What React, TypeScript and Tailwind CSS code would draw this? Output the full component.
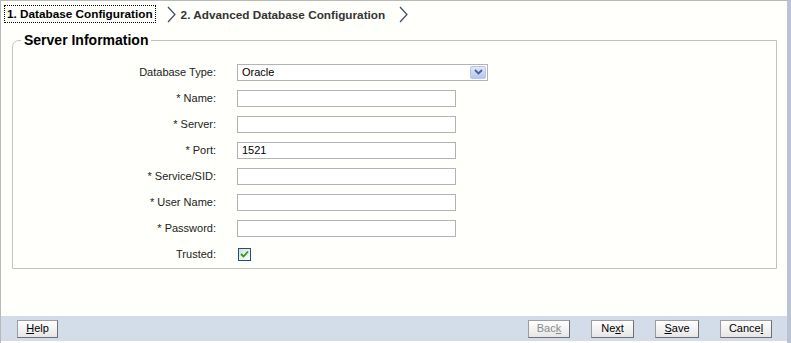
import React from "react";

const font = { fontFamily: '"Liberation Sans", Arial, sans-serif' };

function Chevron() {
  return (
    <svg width="11" height="17" viewBox="0 0 11 17" className="shrink-0">
      <polyline points="2,1 9,8.5 2,16" fill="none" stroke="#3d4a5c" strokeWidth="1.2" />
    </svg>
  );
}

function TextField({ value = "" }: { value?: string }) {
  return (
    <div className="h-[17px] w-[219px] border border-[#b3b3b3] bg-white pl-[4px] text-[11px] leading-[15px] text-black">
      {value}
    </div>
  );
}

function SelectField() {
  return (
    <div className="flex h-[17px] w-[251px] items-center justify-between border border-[#b3b3b3] bg-white pl-[4px] pr-[1px] text-[11px] text-black">
      <span>Oracle</span>
      <span className="flex h-[13px] w-[16px] items-center justify-center rounded-[2px] border border-[#b7c7ef] bg-gradient-to-b from-[#dfe8fb] to-[#b4c6f1]">
        <svg width="9" height="6" viewBox="0 0 9 6">
          <polyline points="1,1 4.5,4.5 8,1" fill="none" stroke="#4d6185" strokeWidth="1.8" />
        </svg>
      </span>
    </div>
  );
}

function Checkbox() {
  return (
    <div className="ml-[1px] flex h-[13px] w-[13px] items-center justify-center border border-[#1c5180] bg-gradient-to-br from-[#dcdcd7] to-[#ffffff]">
      <svg width="9" height="8" viewBox="0 0 9 8">
        <polyline points="1,4 3.5,6.5 8,1.5" fill="none" stroke="#21a121" strokeWidth="1.8" />
      </svg>
    </div>
  );
}

function Btn({ children, w, disabled }: { children: React.ReactNode; w: string; disabled?: boolean }) {
  return (
    <div
      className={`${w} flex h-[18px] items-center justify-center border border-[#9c9c9c] border-b-[#6f6f6f] border-r-[#6f6f6f] bg-gradient-to-b from-[#ffffff] to-[#e6e6e6] text-[11px] ${
        disabled ? "text-[#8a8a8a]" : "text-black"
      }`}
    >
      {children}
    </div>
  );
}

const rows: { label: string; field: React.ReactNode }[] = [
  { label: "Database Type:", field: <SelectField /> },
  { label: "* Name:", field: <TextField /> },
  { label: "* Server:", field: <TextField /> },
  { label: "* Port:", field: <TextField value="1521" /> },
  { label: "* Service/SID:", field: <TextField /> },
  { label: "* User Name:", field: <TextField /> },
  { label: "* Password:", field: <TextField /> },
  { label: "Trusted:", field: <Checkbox /> },
];

export default function App() {
  return (
    <div
      style={font}
      className="flex h-[343px] w-[791px] flex-col overflow-hidden border-l border-t border-[#b9b9b9] border-r-[4px] border-r-[#b9c3d2] bg-[#fffffc]"
    >
      {/* train */}
      <div className="flex h-[39px] items-start gap-[10px] pl-[3px] pt-[4px]">
        <div className="flex h-[18px] items-center border border-dotted border-black px-[2px] text-[11.75px] font-bold text-black">
          1. Database Configuration
        </div>
        <div className="flex items-center gap-[4px] pt-[1px]">
          <Chevron />
          <span className="text-[11.75px] font-bold text-[#333333]">2. Advanced Database Configuration</span>
        </div>
        <div className="ml-[3px] pt-[1px]">
          <Chevron />
        </div>
      </div>

      {/* fieldset */}
      <fieldset className="mx-[11px] mt-[-8px] w-[765px] rounded-tl-[7px] border border-[#c3c3c3] pb-[1px]">
        <legend className="ml-[8px] px-[3px] text-[14px] font-bold leading-[16px] text-black">Server Information</legend>
        <div className="flex flex-col pt-[11px]">
          {rows.map((r) => (
            <div key={r.label} className="flex h-[26px] items-center">
              <div className="w-[203px] text-right text-[11px] text-[#222222]">{r.label}</div>
              <div className="ml-[21px]">{r.field}</div>
            </div>
          ))}
        </div>
      </fieldset>

      <div className="flex-1" />

      {/* footer */}
      <div className="mb-[2px] flex h-[25px] items-center justify-between bg-[#d3ddea] pl-[16px] pr-[15px]">
        <Btn w="w-[41px]">
          <span><u>H</u>elp</span>
        </Btn>
        <div className="flex items-center gap-[21px]">
          <Btn w="w-[42px]" disabled>
            <span>Bac<u>k</u></span>
          </Btn>
          <Btn w="w-[43px]">
            <span>Ne<u>x</u>t</span>
          </Btn>
          <Btn w="w-[44px]">
            <span><u>S</u>ave</span>
          </Btn>
          <Btn w="w-[52px]">
            <span>Cance<u>l</u></span>
          </Btn>
        </div>
      </div>
    </div>
  );
}
